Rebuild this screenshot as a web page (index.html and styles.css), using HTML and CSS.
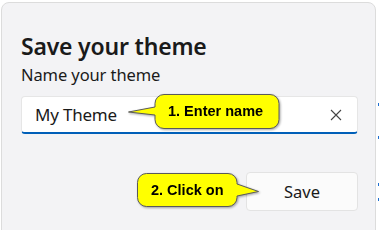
FILE: index.html
```html
<!DOCTYPE html>
<html>
<head>
<meta charset="utf-8">
<link rel="stylesheet" href="styles.css">
</head>
<body>
<div class="stage">
  <div class="dialog">
    <h1 class="title">Save your theme</h1>
    <div class="label">Name your theme</div>
    <div class="field">
      <span class="value">My Theme</span>
      <svg class="clear" width="12" height="12" viewBox="0 0 12 12"><path d="M1 1L11 11M11 1L1 11" stroke="#444" stroke-width="1.1" fill="none"/></svg>
    </div>
    <div class="actions">
      <button class="save">Save</button>
    </div>
  </div>
  <div class="ticks">
    <span class="tick t1"></span>
    <span class="tick t2"></span>
    <span class="tick t3"></span>
    <span class="tick t4"></span>
  </div>
  <div class="callout c1">
    <svg width="160" height="44" viewBox="0 0 160 44">
      <path d="M37 1.5H143a9 9 0 0 1 9 9V26.5a9 9 0 0 1-9 9H37a9 9 0 0 1-9-9V22L1.5 19L28 14V10.5a9 9 0 0 1 9-9Z" fill="#ffff00" stroke="#5a5a5a" stroke-width="1"/>
    </svg>
    <span class="ctext">1. Enter name</span>
  </div>
  <div class="callout c2">
    <svg width="130" height="44" viewBox="0 0 130 44">
      <path d="M10.5 1.5H92a9 9 0 0 1 9 9V12L122.5 19.5L101 24V25.5a9 9 0 0 1-9 9H10.5a9 9 0 0 1-9-9V10.5a9 9 0 0 1 9-9Z" fill="#ffff00" stroke="#5a5a5a" stroke-width="1"/>
    </svg>
    <span class="ctext">2. Click on</span>
  </div>
</div>
</body>
</html>
```
FILE: styles.css
```css
html, body {
  margin: 0;
  padding: 0;
  background: #ffffff;
  overflow: hidden;
}
.stage {
  position: relative;
  width: 379px;
  height: 230px;
  overflow: hidden;
}
.dialog {
  box-sizing: border-box;
  margin: 2px 0 0 1px;
  width: 375px;
  height: 240px;
  border: 1px solid #dcdcdc;
  border-radius: 8px;
  background: #f3f3f5;
  padding: 29px 19px 0 19px;
  font-family: "Noto Sans", "Open Sans", sans-serif;
  color: #1a1a1a;
  display: flex;
  flex-direction: column;
}
.title {
  margin: 0;
  font-size: 23px;
  font-weight: 600;
  line-height: 28px;
  letter-spacing: -0.2px;
}
.label {
  margin-top: 5px;
  font-size: 16.5px;
  line-height: 20px;
  letter-spacing: -0.1px;
}
.field {
  margin-top: 11px;
  height: 38px;
  box-sizing: border-box;
  background: #ffffff;
  border: 1px solid #e6e6e6;
  border-bottom: 2px solid #005fb8;
  border-radius: 4px;
  display: flex;
  align-items: center;
  justify-content: space-between;
  padding: 0 15px 0 13px;
  width: 337px;
}
.value {
  font-size: 17px;
  color: #1a1a1a;
  letter-spacing: -0.2px;
}
.clear {
  display: block;
}
.actions {
  margin-top: 38px;
  display: flex;
  justify-content: flex-end;
  width: 337px;
}
.save {
  width: 112px;
  height: 39px;
  box-sizing: border-box;
  background: #fbfbfb;
  border: 1px solid #e3e3e3;
  border-radius: 4px;
  font-family: "Noto Sans", "Open Sans", sans-serif;
  font-size: 16.5px;
  color: #1a1a1a;
  padding: 0;
}
.ticks .tick {
  position: absolute;
  left: 378px;
  width: 1px;
  height: 3px;
  background: #1f6fd0;
}
.t1 { top: 103px; }
.t2 { top: 136px; }
.t3 { top: 183px; }
.t4 { top: 198px; }
.callout {
  position: absolute;
  filter: drop-shadow(1.5px 1.5px 1px rgba(0,0,0,0.35));
}
.callout svg {
  display: block;
}
.ctext {
  position: absolute;
  top: 0;
  font-family: "Liberation Sans", Arial, sans-serif;
  font-weight: bold;
  font-size: 14.5px;
  line-height: 37px;
  color: #000;
  white-space: nowrap;
}
.c1 {
  left: 127px;
  top: 93px;
}
.c1 .ctext {
  left: 41px;
}
.c2 {
  left: 136px;
  top: 172px;
}
.c2 .ctext {
  left: 15px;
}
```
